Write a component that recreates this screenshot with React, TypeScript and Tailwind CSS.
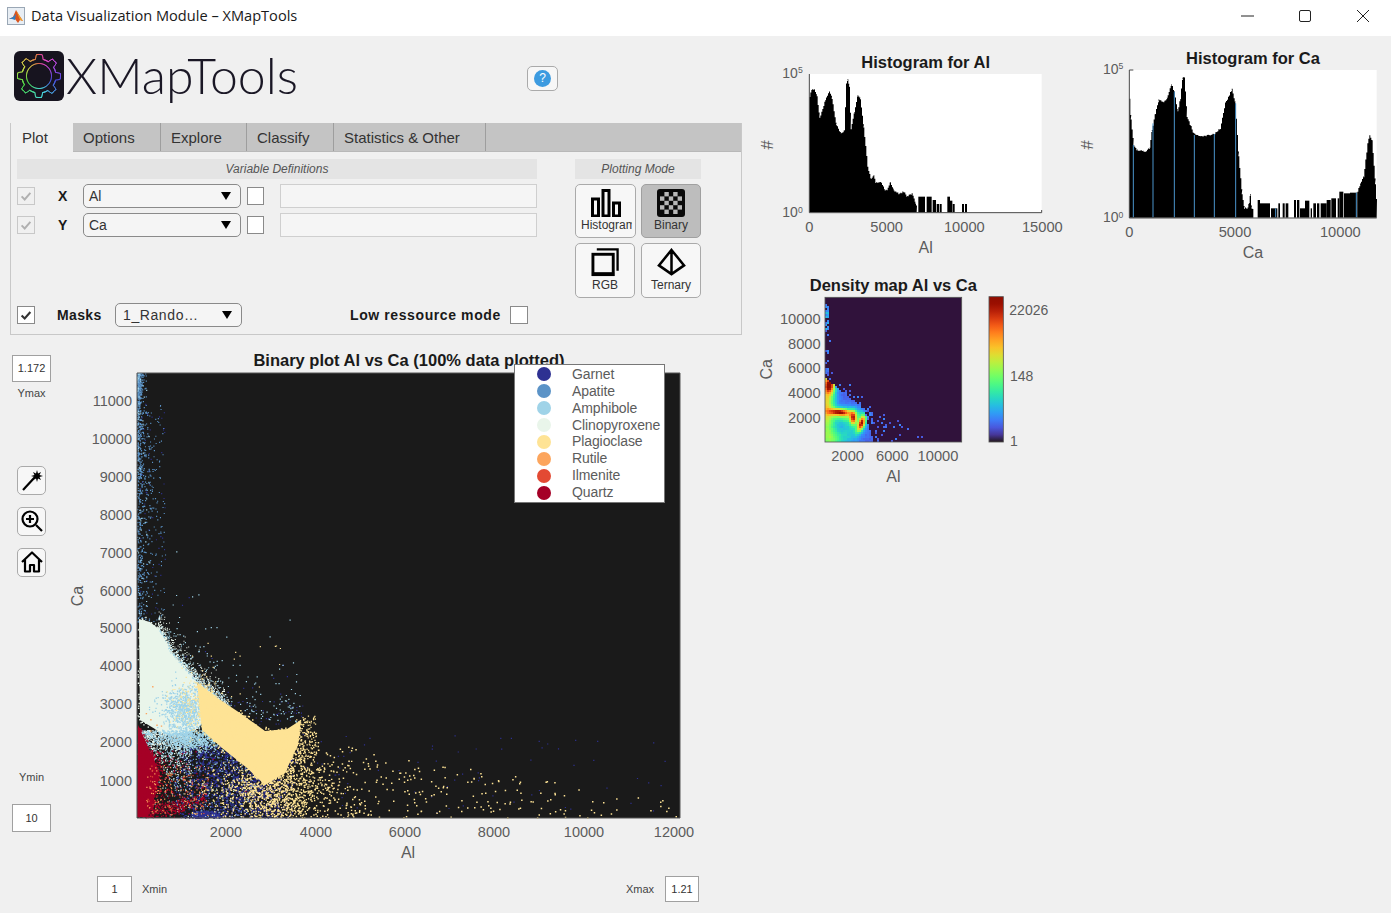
import { useMemo } from "react";
import type { ReactNode } from "react";

type Pt = [number, number];

function rng(seed: number) {
  let a = seed;
  return () => {
    a |= 0;
    a = (a + 0x6d2b79f5) | 0;
    let t = Math.imul(a ^ (a >>> 15), 1 | a);
    t = (t + Math.imul(t ^ (t >>> 7), 61 | t)) ^ t;
    return ((t ^ (t >>> 14)) >>> 0) / 4294967296;
  };
}

function inside(poly: Pt[], x: number, y: number) {
  let hit = false;
  for (let i = 0, j = poly.length - 1; i < poly.length; j = i++) {
    const [xi, yi] = poly[i];
    const [xj, yj] = poly[j];
    if (yi > y !== yj > y && x < ((xj - xi) * (y - yi)) / (yj - yi) + xi) hit = !hit;
  }
  return hit;
}

const pts = (p: Pt[]) => p.map((q) => q.join(",")).join(" ");

// rough outline -> stepped, slightly noisy histogram outline
function stepped(p: Pt[], seed: number, base: number) {
  const r = rng(seed);
  const out: Pt[] = [[p[0][0], base]];
  for (let i = 0; i < p.length - 1; i++) {
    const [x0, y0] = p[i];
    const [x1, y1] = p[i + 1];
    for (let x = x0; x < x1; x += 3) {
      const y = Math.min(base, y0 + ((y1 - y0) * (x - x0)) / (x1 - x0 || 1) + (r() - 0.5) * 5);
      out.push([x, y], [x + 3, y]);
    }
  }
  out.push([p[p.length - 1][0], base]);
  return out;
}

function turbo(t: number) {
  const r = 0.13572138 + t * (4.6153926 + t * (-42.66032258 + t * (132.13108234 + t * (-152.94239396 + t * 59.28637943))));
  const g = 0.09140261 + t * (2.19418839 + t * (4.84296658 + t * (-14.18503333 + t * (4.27729857 + t * 2.82956604))));
  const b = 0.1066733 + t * (12.64194608 + t * (-60.58204836 + t * (110.36276771 + t * (-89.90310912 + t * 27.34824973))));
  const c = (v: number) => Math.round(Math.min(1, Math.max(0, v)) * 255);
  return `rgb(${c(r)},${c(g)},${c(b)})`;
}

const GARNET = "#2e3192";
const APATITE = "#5b93c7";
const AMPHIBOLE = "#9fd3e8";
const CLINO = "#e9f5ea";
const PLAG = "#fee395";
const RUTILE = "#fca55d";
const ILMENITE = "#e34a33";
const QUARTZ = "#a50026";

const clinoCore: Pt[] = [[139, 619], [150, 622], [160, 630], [171, 652], [195, 679], [210, 713], [195, 731], [165, 735], [140, 720]];
const plagCore: Pt[] = [[197, 682], [213, 695], [240, 713], [265, 731], [287, 729], [301, 720], [298, 745], [285, 773], [265, 785], [247, 768], [222, 748], [202, 730]];
const quartzCore: Pt[] = [[138, 725], [146, 742], [160, 773], [155, 795], [148, 817], [137, 817]];
const quartzBand: Pt[] = [[150, 806], [175, 803], [203, 794], [205, 798], [180, 811], [150, 815]];

function buildScatter() {
  const r = rng(42);
  const layers: Record<string, string[]> = {};
  const add = (c: string, x: number, y: number, s = 1.4) => {
    if (x < 137 || x > 680 || y < 373 || y > 817.5) return;
    (layers[c] ||= []).push(`M${x.toFixed(1)} ${y.toFixed(1)}h${s}v${s}h-${s}z`);
  };
  const exp = (k: number) => -Math.log(1 - r()) * k;
  const gauss = () => Math.sqrt(-2 * Math.log(1 - r())) * Math.cos(2 * Math.PI * r());
  // sample a polygon, jittered so that its edge goes soft
  const cloud = (poly: Pt[], n: number, jitter: number, c: string, s = 1.4) => {
    const xs = poly.map((p) => p[0]);
    const ys = poly.map((p) => p[1]);
    const x0 = Math.min(...xs);
    const w = Math.max(...xs) - x0;
    const y0 = Math.min(...ys);
    const h = Math.max(...ys) - y0;
    for (let i = 0; i < n; i++) {
      const x = x0 + r() * w;
      const y = y0 + r() * h;
      if (inside(poly, x, y)) add(c, x + gauss() * jitter, y + gauss() * jitter, s);
    }
  };

  // apatite strip climbing the left edge
  for (let i = 0; i < 900; i++) {
    const y = 373 + Math.pow(r(), 1.9) * 250;
    add(r() < 0.92 ? APATITE : AMPHIBOLE, 137 + exp(1.6 + (y - 373) * 0.02), y, 1.2);
  }
  for (let i = 0; i < 170; i++) add(r() < 0.7 ? APATITE : GARNET, 140 + r() * 25, 400 + r() * 220, 1.1);

  // garnet cloud
  for (let i = 0; i < 1500; i++) add(GARNET, 172 + r() * 95 + r() * 30, 745 + r() * 73, 1.4);
  for (let i = 0; i < 180; i++) add(GARNET, 192 + r() * 28, 811 + r() * 7, 1.6);
  for (let i = 0; i < 70; i++) add(GARNET, 285 + r() * 380, 735 + r() * 82, 1.2);
  for (let i = 0; i < 60; i++) add(GARNET, 225 + r() * 80, 700 + r() * 40, 1.1);
  for (let i = 0; i < 450; i++) add(r() < 0.4 ? APATITE : AMPHIBOLE, 165 + r() * 90, 745 + r() * 72, 1.1);

  // clinopyroxene body with a fuzzy ridge above it
  cloud(clinoCore, 2500, 2.5, CLINO);
  const ridge = (x: number) => (x < 171 ? 630 + (x - 160) * 2 : x < 195 ? 652 + (x - 171) * 1.12 : 679 + (x - 195) * 0.85);
  for (let i = 0; i < 1000; i++) {
    const x = 158 + r() * 70;
    add(r() < 0.8 ? CLINO : AMPHIBOLE, x, ridge(x) - exp(5) + 2, 1);
  }
  for (let i = 0; i < 210; i++) {
    const x = 165 + r() * 135;
    const edge = x < 238 ? ridge(x) : 716 + (x - 238) * 0.1;
    add(r() < 0.85 ? AMPHIBOLE : GARNET, x, edge - exp(19), 1.2);
  }
  for (let i = 0; i < 1100; i++) {
    add(r() < 0.65 ? CLINO : AMPHIBOLE, 141 + r() * 50, 730 + exp(15), 1.2);
  }

  // plagioclase spread
  cloud(plagCore, 3000, 2.5, PLAG, 1.5);
  for (let i = 0; i < 1300; i++) {
    add(PLAG, 272 + gauss() * 30, 792 + gauss() * 19, 1.4);
  }
  for (let i = 0; i < 500; i++) {
    const x = 250 + exp(110);
    const top = 735 + (x - 280) * 0.17;
    add(PLAG, x, top + r() * (818 - top), 1.5);
  }
  for (let i = 0; i < 150; i++) add(PLAG, 296 + r() * 20, 715 + r() * 45, 1.3);
  for (let i = 0; i < 14; i++) add(PLAG, 205 + r() * 80, 640 + r() * 60, 1.2);

  // amphibole patches inside the clino cloud
  for (let i = 0; i < 800; i++) add(AMPHIBOLE, 186 + gauss() * 12, 708 + gauss() * 11, 1.3);
  for (let i = 0; i < 800; i++) add(AMPHIBOLE, 195 + gauss() * 16, 738 + gauss() * 6, 1.3);
  for (let i = 0; i < 220; i++) add(PLAG, 196 + gauss() * 12, 705 + gauss() * 16, 1.2);

  // oxides at the base
  for (let i = 0; i < 240; i++) add(r() < 0.6 ? RUTILE : ILMENITE, 146 + r() * 62, 765 + r() * 50, 1.2);
  for (let i = 0; i < 6; i++) add(RUTILE, 145 + r() * 20, 675 + r() * 60, 1.4);

  // quartz fringe
  cloud(quartzCore, 900, 1.5, QUARTZ);
  cloud(quartzBand, 500, 2, QUARTZ);
  for (let i = 0; i < 350; i++) add(QUARTZ, 148 + exp(10), 750 + r() * 67, 1.3);

  return [APATITE, GARNET, AMPHIBOLE, CLINO, PLAG, RUTILE, ILMENITE, QUARTZ]
    .filter((c) => layers[c])
    .map((c) => ({ c, d: layers[c].join("") }));
}

function buildDensity() {
  const r = rng(7);
  const g = (u: number, v: number, cu: number, cv: number, su: number, sv: number) =>
    Math.exp(-(((u - cu) / su) ** 2) - ((v - cv) / sv) ** 2);
  const cells: { x: number; y: number; f: string }[] = [];
  const step = 6;
  for (let v = 84; v < 516; v += step) {
    for (let u = 225; u < 635; u += step) {
      let t = 0;
      const edge = 322 + (u - 225) * 0.8;
      const solid = v > edge && u < 340 + (v - 420) * 0.3;
      if (solid) {
        t = 0.1 + 0.03 * r();
        t += 0.5 * g(u, v, 225, 400, 26, 100);
        t += 0.26 * g(u, v, 245, 505, 38, 34);
        t += 0.14 * g(u, v, 300, 480, 30, 40);
        t += 0.32 * g(u, v, 285, 432, 42, 22);
        t += 0.22 * g(u, v, 335, 452, 12, 26);
        t += 0.62 * g(u, v, 236, 342, 15, 24);
        const a = u - 265;
        const b = v - 423 - a * 0.05;
        t += 0.6 * Math.exp(-((a / 30) ** 2) - (b / 10) ** 2);
        t += 0.55 * g(u, v, 307, 442, 10, 20);
        const c = u - 330 + (v - 460) * 0.35;
        t += 0.6 * Math.exp(-((c / 10) ** 2) - ((v - 460) / 23) ** 2);
        if (v < edge + 7 && u > 250) t = Math.min(t, 0.16 + 0.06 * r());
      } else {
        const left = u < 238 && v > 100 && v < 325 && r() < (u < 232 ? 0.6 : 0.09) * (v > 180 && v < 250 && u < 232 ? 0.5 : 1);
        const under = u >= 335 && v > 400 + (u - 340) * 0.4 && r() < 0.24 * Math.exp(-(u - 340) / 80);
        const over = u > 240 && u < 360 && v > edge - 40 && v < edge && r() < 0.16;
        if (left) t = v < 180 ? 0.14 + r() * 0.12 : 0.1 + r() * 0.08;
        if (under || over) t = 0.09 + r() * 0.08;
      }
      if (t > 0) cells.push({ x: u, y: v, f: turbo(Math.min(t, 1)) });
    }
  }
  return cells;
}

function Tick({ x, y, children, end }: { x: number; y: number; children: ReactNode; end?: boolean }) {
  return (
    <text x={x} y={y} fontSize={44} fill="#5c5c5c" textAnchor={end ? "end" : "middle"}>
      {children}
    </text>
  );
}

function Pow({ x, y, p }: { x: number; y: number; p: number }) {
  return (
    <text x={x} y={y} fontSize={42} fill="#5c5c5c">
      10
      <tspan dy={-14} fontSize={26}>
        {p}
      </tspan>
    </text>
  );
}

function Hash() {
  return (
    <text x={46} y={315} fontSize={50} fill="#5c5c5c" textAnchor="middle" dominantBaseline="middle" transform="rotate(90 46 315)">
      #
    </text>
  );
}

function HistAl() {
  const main: Pt[] = [[178, 170], [184, 150], [192, 148], [200, 170], [208, 235], [225, 180], [237, 153], [245, 175], [258, 255], [272, 282], [282, 270], [288, 130], [292, 120], [297, 140], [302, 268], [312, 215], [322, 165], [330, 175], [340, 260], [352, 380], [362, 418], [370, 405], [376, 428], [390, 425], [404, 450], [410, 448], [420, 425], [430, 450], [445, 462], [460, 455], [470, 470], [485, 460], [495, 490], [500, 500]];
  const bars = [[505, 525, 470], [530, 545, 470], [548, 558, 480], [560, 568, 492], [570, 575, 492], [592, 600, 470], [600, 607, 482], [608, 614, 492], [636, 642, 492], [645, 651, 492]];
  const outline = useMemo(() => stepped(main, 3, 517), []);
  return (
    <svg viewBox="0 0 960 690" className="h-[230px] w-[320px] shrink-0">
      <rect x={178} y={102} width={697} height={415} fill="#ffffff" />
      <polygon points={pts(outline)} fill="#000000" />
      {bars.map(([a, b, t]) => (
        <rect key={a} x={a} y={t} width={b - a} height={517 - t} fill="#000000" />
      ))}
      <path d="M178 102V518H875V510" fill="none" stroke="#4a4a4a" strokeWidth={3} />
      <text x={527} y={84} fontSize={49.5} fontWeight={700} fill="#1a1a1a" textAnchor="middle">
        Histogram for Al
      </text>
      <Pow x={97} y={113} p={5} />
      <Pow x={97} y={532} p={0} />
      <Hash />
      <Tick x={178} y={575}>0</Tick>
      <Tick x={410} y={575}>5000</Tick>
      <Tick x={643} y={575}>10000</Tick>
      <Tick x={877} y={575}>15000</Tick>
      <text x={527} y={638} fontSize={48} fill="#5c5c5c" textAnchor="middle">
        Al
      </text>
    </svg>
  );
}

function HistCa() {
  const main: Pt[] = [[178, 175], [182, 240], [190, 315], [200, 330], [225, 335], [238, 325], [245, 270], [255, 220], [265, 180], [280, 185], [290, 175], [303, 133], [312, 155], [322, 215], [330, 175], [337, 112], [342, 112], [350, 230], [370, 280], [395, 290], [430, 283], [450, 265], [465, 190], [485, 148], [495, 190], [505, 350], [515, 460], [522, 505], [532, 505], [536, 490], [540, 462], [544, 505], [550, 505]];
  const tail: Pt[] = [[862, 455], [870, 432], [880, 410], [892, 310], [898, 288], [905, 300], [915, 430], [920, 505]];
  const bars = [[563, 570, 480], [570, 600, 490], [603, 622, 505], [625, 630, 490], [638, 644, 490], [647, 655, 490], [672, 678, 480], [681, 688, 480], [690, 705, 505], [705, 718, 482], [722, 726, 505], [730, 738, 490], [741, 748, 490], [752, 770, 490], [770, 782, 480], [784, 798, 475], [803, 808, 475], [808, 820, 455], [822, 840, 460], [840, 862, 458]];
  const blue = [[190, 315], [249, 250], [313, 155], [373, 285], [433, 282], [497, 190], [617, 505], [859, 458]];
  const a = useMemo(() => stepped(main, 5, 533), []);
  const b = useMemo(() => stepped(tail, 6, 533), []);
  return (
    <svg viewBox="0 0 960 690" className="h-[230px] w-[320px] shrink-0">
      <rect x={178} y={90} width={742} height={443} fill="#ffffff" />
      <polygon points={pts(a)} fill="#000000" />
      <polygon points={pts(b)} fill="#000000" />
      {bars.map(([x0, x1, t]) => (
        <rect key={x0} x={x0} y={t} width={x1 - x0} height={533 - t} fill="#000000" />
      ))}
      {blue.map(([x, t]) => (
        <line key={x} x1={x} x2={x} y1={t} y2={532} stroke="#4a94cc" strokeWidth={3} />
      ))}
      <path d="M190 90H178V534H920" fill="none" stroke="#4a4a4a" strokeWidth={3} />
      <text x={549} y={72} fontSize={49.5} fontWeight={700} fill="#1a1a1a" textAnchor="middle">
        Histogram for Ca
      </text>
      <Pow x={99} y={101} p={5} />
      <Pow x={99} y={547} p={0} />
      <Hash />
      <Tick x={178} y={590}>0</Tick>
      <Tick x={495} y={590}>5000</Tick>
      <Tick x={811} y={590}>10000</Tick>
      <text x={549} y={655} fontSize={48} fill="#5c5c5c" textAnchor="middle">
        Ca
      </text>
    </svg>
  );
}

function DensityMap() {
  const cells = useMemo(buildDensity, []);
  const stops = Array.from({ length: 21 }, (_, i) => i / 20);
  return (
    <svg viewBox="0 0 960 660" className="h-[220px] w-[320px]">
      <defs>
        <linearGradient id="turbo" x1="0" y1="1" x2="0" y2="0">
          {stops.map((s) => (
            <stop key={s} offset={s} stopColor={turbo(s)} />
          ))}
        </linearGradient>
        <clipPath id="dens">
          <rect x={225} y={82} width={410} height={434} />
        </clipPath>
      </defs>
      <rect x={225} y={82} width={410} height={434} fill="#30123b" />
      <g clipPath="url(#dens)">
        <g className="blur-[0.5px]">
          {cells.map((c) => (
            <rect key={`${c.x}-${c.y}`} x={c.x} y={c.y} width={6} height={6} fill={c.f} />
          ))}
        </g>
      </g>
      <rect x={225} y={82} width={410} height={434} fill="none" stroke="#555" strokeWidth={2.5} />
      <rect x={717} y={80} width={43} height={436} fill="url(#turbo)" stroke="#555" strokeWidth={2.5} />
      <text x={430} y={62} fontSize={49.5} fontWeight={700} fill="#1a1a1a" textAnchor="middle">
        Density map Al vs Ca
      </text>
      {[["10000", 162], ["8000", 236], ["6000", 310], ["4000", 384], ["2000", 458]].map(([l, y]) => (
        <Tick key={l} x={212} y={y as number} end>
          {l}
        </Tick>
      ))}
      <Tick x={293} y={573}>2000</Tick>
      <Tick x={427} y={573}>6000</Tick>
      <Tick x={564} y={573}>10000</Tick>
      <text x={430} y={635} fontSize={48} fill="#5c5c5c" textAnchor="middle">
        Al
      </text>
      <text x={54} y={298} fontSize={48} fill="#5c5c5c" textAnchor="middle" dominantBaseline="middle" transform="rotate(-90 54 298)">
        Ca
      </text>
      <text x={778} y={135} fontSize={42} fill="#5c5c5c">22026</text>
      <text x={780} y={334} fontSize={42} fill="#5c5c5c">148</text>
      <text x={780} y={529} fontSize={42} fill="#5c5c5c">1</text>
    </svg>
  );
}

function BinaryPlot() {
  const layers = useMemo(buildScatter, []);
  const yt = [[11000, 401], [10000, 439], [9000, 477], [8000, 515], [7000, 553], [6000, 591], [5000, 628], [4000, 666], [3000, 704], [2000, 742], [1000, 781]];
  const xt = [[2000, 226], [4000, 316], [6000, 405], [8000, 494], [10000, 584], [12000, 674]];
  const byColor = (c: string) => layers.find((l) => l.c === c);
  return (
    <svg viewBox="60 345 640 525" className="h-[525px] w-[640px]">
      <text x={409} y={366} fontSize={16.5} fontWeight={700} fill="#1a1a1a" textAnchor="middle">
        Binary plot Al vs Ca (100% data plotted)
      </text>
      <rect x={137} y={373} width={543} height={445} fill="#1a1a1a" />
      <g className="blur-[0.3px]">
        <path d={byColor(APATITE)?.d} fill={APATITE} />
        <path d={byColor(GARNET)?.d} fill={GARNET} />
        <polygon points={pts(clinoCore)} fill={CLINO} />
        <path d={byColor(CLINO)?.d} fill={CLINO} />
        <path d={byColor(AMPHIBOLE)?.d} fill={AMPHIBOLE} />
        <polygon points={pts(plagCore)} fill={PLAG} />
        <path d={byColor(PLAG)?.d} fill={PLAG} />
        <polygon points={pts(quartzCore)} fill={QUARTZ} />
        <path d={byColor(QUARTZ)?.d} fill={QUARTZ} />
        <path d={byColor(RUTILE)?.d} fill={RUTILE} />
        <path d={byColor(ILMENITE)?.d} fill={ILMENITE} />
      </g>
      <path d="M137 373H680V818H137Z" fill="none" stroke="#555" strokeWidth={1} />
      {yt.map(([v, y]) => (
        <text key={v} x={132} y={y + 5} fontSize={14.5} fill="#5c5c5c" textAnchor="end">
          {v}
        </text>
      ))}
      {xt.map(([v, x]) => (
        <text key={v} x={x} y={837} fontSize={14.5} fill="#5c5c5c" textAnchor="middle">
          {v}
        </text>
      ))}
      <text x={408} y={858} fontSize={16} fill="#5c5c5c" textAnchor="middle">
        Al
      </text>
      <text x={79} y={596} fontSize={16} fill="#5c5c5c" textAnchor="middle" dominantBaseline="middle" transform="rotate(-90 79 596)">
        Ca
      </text>
    </svg>
  );
}

const legend = [
  ["Garnet", "bg-[#2e3192]"],
  ["Apatite", "bg-[#5b93c7]"],
  ["Amphibole", "bg-[#9fd3e8]"],
  ["Clinopyroxene", "bg-[#e9f5ea]"],
  ["Plagioclase", "bg-[#fee395]"],
  ["Rutile", "bg-[#fca55d]"],
  ["Ilmenite", "bg-[#e34a33]"],
  ["Quartz", "bg-[#a50026]"],
];

function Legend() {
  return (
    <div className="absolute left-[514px] top-[19px] flex h-[139px] w-[151px] flex-col justify-center border border-[#777] bg-white">
      {legend.map(([name, dot]) => (
        <div key={name} className="flex h-[16.9px] items-center">
          <span className={`ml-[22px] h-[14px] w-[14px] rounded-full ${dot}`} />
          <span className="ml-[21px] text-[14px] tracking-[-0.1px] text-[#5c5c5c]">{name}</span>
        </div>
      ))}
    </div>
  );
}

function GearLogo() {
  const segs = useMemo(() => {
    const out: { x1: number; y1: number; x2: number; y2: number; c: string }[] = [];
    const hue = (a: number) => {
      const ccw = (((-a - Math.PI / 2) % (Math.PI * 2)) + Math.PI * 2) % (Math.PI * 2);
      return Math.round(12 + (ccw / (Math.PI * 2)) * 320);
    };
    const gearR = (a: number) => {
      const n = (((a / (Math.PI * 2)) * 8 + 800.15) % 1 + 1) % 1;
      if (n < 0.34) return 21.5;
      if (n < 0.46) return 21.5 - 4.5 * ((n - 0.34) / 0.12);
      if (n < 0.88) return 17;
      return 17 + 4.5 * ((n - 0.88) / 0.12);
    };
    const N = 320;
    for (let i = 0; i < N; i++) {
      const a = (i / N) * Math.PI * 2;
      const b = ((i + 1) / N) * Math.PI * 2;
      out.push({
        x1: 25 + Math.cos(a) * gearR(a),
        y1: 25 + Math.sin(a) * gearR(a),
        x2: 25 + Math.cos(b) * gearR(b),
        y2: 25 + Math.sin(b) * gearR(b),
        c: `hsl(${hue(a)} 70% 58%)`,
      });
    }
    for (let i = 0; i < 72; i++) {
      const a = (i / 72) * Math.PI * 2;
      const b = ((i + 1) / 72) * Math.PI * 2;
      out.push({
        x1: 25 + Math.cos(a) * 12.5,
        y1: 25 + Math.sin(a) * 12.5,
        x2: 25 + Math.cos(b) * 12.5,
        y2: 25 + Math.sin(b) * 12.5,
        c: `hsl(${hue(a)} 70% 58%)`,
      });
    }
    return out;
  }, []);
  return (
    <svg viewBox="0 0 50 50" className="h-[50px] w-[50px] shrink-0">
      <rect width={50} height={50} rx={6} fill="#17141f" />
      {segs.map((s, i) => (
        <line key={i} x1={s.x1} y1={s.y1} x2={s.x2} y2={s.y2} stroke={s.c} strokeWidth={0.9} strokeLinecap="round" />
      ))}
    </svg>
  );
}

function Check({ state }: { state: "off" | "dim" | "on" }) {
  if (state === "dim")
    return (
      <span className="flex h-[18px] w-[18px] items-center justify-center border border-[#c8c8c8] bg-[#f0f0f0]">
        <svg viewBox="0 0 16 16" className="h-[14px] w-[14px]">
          <path d="M3 8.5l3.5 3.5L13 4.5" fill="none" stroke="#b0b0b0" strokeWidth={2.2} />
        </svg>
      </span>
    );
  return (
    <span className="flex h-[18px] w-[18px] shrink-0 items-center justify-center border border-[#8a8a8a] bg-white">
      {state === "on" && (
        <svg viewBox="0 0 16 16" className="h-[14px] w-[14px]">
          <path d="M3 8.5l3.5 3.5L13 4.5" fill="none" stroke="#333" strokeWidth={2.4} />
        </svg>
      )}
    </span>
  );
}

function Select({ label, w, wide }: { label: string; w: string; wide?: boolean }) {
  return (
    <div className={`flex h-[24px] items-center justify-between rounded-[5px] border border-[#8a8a8a] bg-[#f5f5f5] pr-[9px] text-[14px] text-[#333] ${wide ? "pl-[7px] tracking-[0.6px]" : "pl-[5px]"} ${w}`}>
      <span>{label}</span>
      <span className="h-0 w-0 border-x-[5px] border-t-[8px] border-x-transparent border-t-black" />
    </div>
  );
}

function VarRow({ name, value }: { name: string; value: string }) {
  return (
    <div className="flex h-[24px] items-center">
      <Check state="dim" />
      <span className="ml-[23px] w-[25px] text-[14px] font-bold text-[#1a1a1a]">{name}</span>
      <Select label={value} w="w-[158px]" />
      <span className="ml-[6px] h-[18px] w-[17px] border border-[#8a8a8a] bg-white" />
      <span className="ml-[16px] h-[24px] w-[257px] border border-[#cfcfcf] bg-[#f5f5f5]" />
    </div>
  );
}

function ModeButton({ label, active, children, clip, low }: { label: string; active?: boolean; children: ReactNode; clip?: boolean; low?: boolean }) {
  return (
    <div className={`flex flex-col items-center overflow-hidden rounded-[5px] border pt-[3px] text-[12px] leading-[14px] ${low ? "h-[55px]" : "h-[54px]"} ${active ? "border-[#a0a0a0] bg-[#bdbdbd] text-[#333]" : "border-[#aaa] bg-[#f7f7f7] text-[#333]"} ${clip ? "w-[61px] items-start pl-[5px]" : "w-[60px]"}`}>
      <div className={`flex items-center ${low ? "h-[31px]" : "h-[30px]"} ${clip ? "w-[50px] justify-center" : ""}`}>{children}</div>
      <span className={clip ? "w-[51px] overflow-hidden whitespace-nowrap" : ""}>{label}</span>
    </div>
  );
}

function Field({ value, w, h }: { value: string; w: string; h: string }) {
  return <div className={`flex items-center justify-center border border-[#a0a0a0] bg-white text-[11px] text-[#333] ${w} ${h}`}>{value}</div>;
}

function ToolButton({ children }: { children: ReactNode }) {
  return <div className="ml-[5px] flex h-[29px] w-[29px] items-center justify-center rounded-[5px] border border-[#aaa] bg-[#f7f7f7]">{children}</div>;
}

const tabs = [
  ["Options", "w-[88px]"],
  ["Explore", "w-[86px]"],
  ["Classify", "w-[87px]"],
  ["Statistics & Other", "w-[152px]"],
];

const checker = [0, 1, 2, 3, 4].flatMap((i) => [0, 1, 2, 3, 4].filter((j) => (i + j) % 2 === 1).map((j) => [i, j]));

export default function App() {
  return (
    <div className="h-[913px] w-[1391px] overflow-hidden bg-[#f0f0f0] font-['Liberation_Sans',sans-serif]">
      {/* Title bar */}
      <div className="flex h-[36px] items-center bg-white pb-[4px] pl-[7px]">
        <svg viewBox="0 0 18 18" className="h-[18px] w-[18px]">
          <rect x={0.5} y={0.5} width={17} height={17} fill="#e8eef4" stroke="#9aa7b5" />
          <path d="M2 12l4-2 3-7 3 5 4 6-3-1-2 3-3-4z" fill="#d9541e" />
          <path d="M2 12l4-2 3-3-1 6-3-1z" fill="#2f7fc4" />
          <path d="M9 3l3 5 4 6-3-1z" fill="#f0a02c" />
        </svg>
        <span className="ml-[6px] font-['Open_Sans',sans-serif] text-[14.6px] text-[#1a1a1a]">Data Visualization Module – XMapTools</span>
        <div className="ml-auto flex items-center">
          <svg viewBox="0 0 14 14" className="mr-[44px] h-[14px] w-[14px]">
            <path d="M1 7h13" stroke="#222" strokeWidth={1} />
          </svg>
          <svg viewBox="0 0 14 14" className="mr-[44px] h-[14px] w-[14px]">
            <rect x={1.5} y={1.5} width={11} height={11} rx={1.5} fill="none" stroke="#222" strokeWidth={1} />
          </svg>
          <svg viewBox="0 0 14 14" className="mr-[21px] h-[14px] w-[14px]">
            <path d="M1 1l12 12M13 1L1 13" stroke="#222" strokeWidth={1} />
          </svg>
        </div>
      </div>

      <div className="flex">
        {/* Left column */}
        <div className="w-[750px] shrink-0">
          <div className="flex h-[87px] items-center pb-[8px] pl-[14px]">
            <GearLogo />
            <span className="ml-[2px] mt-[-1px] font-['Lato',sans-serif] text-[50px] font-light leading-none text-[#1a1725]">XMapTools</span>
            <div className="ml-[229px] mt-[5px] flex h-[25px] w-[31px] items-center justify-center rounded-[5px] border border-[#aaa] bg-[#f7f7f7]">
              <span className="flex h-[17px] w-[17px] items-center justify-center rounded-full bg-[#3d9be0] text-[12px] text-white">?</span>
            </div>
          </div>

          {/* Tab panel */}
          <div className="ml-[10px] h-[212px] w-[732px] border border-t-0 border-[#c8c8c8]">
            <div className="flex h-[29px] border-b border-[#b8b8b8] bg-[#c4c4c4] text-[15px] text-[#333]">
              <div className="-mb-px flex w-[62px] items-center bg-[#f0f0f0] pl-[11px] pt-[2px]">Plot</div>
              {tabs.map(([t, w]) => (
                <div key={t} className={`flex items-center border-r border-[#9e9e9e] pl-[10px] pt-[2px] ${w}`}>
                  {t}
                </div>
              ))}
            </div>
            <div className="flex pl-[6px] pt-[7px]">
              <div className="w-[520px]">
                <div className="flex h-[20px] items-center justify-center bg-[#e4e4e4] text-[12px] italic text-[#555]">Variable Definitions</div>
                <div className="mt-[5px] flex flex-col gap-[5px]">
                  <VarRow name="X" value="Al" />
                  <VarRow name="Y" value="Ca" />
                </div>
                <div className="mt-[66px] flex h-[24px] items-center">
                  <Check state="on" />
                  <span className="ml-[22px] w-[58px] text-[14px] font-bold tracking-[0.35px] text-[#1a1a1a]">Masks</span>
                  <Select label="1_Rando…" w="w-[127px]" wide />
                  <span className="ml-[108px] text-[14px] font-bold tracking-[0.6px] text-[#1a1a1a]">Low ressource mode</span>
                  <span className="ml-[9px]">
                    <Check state="off" />
                  </span>
                </div>
              </div>
              <div className="ml-[38px] w-[126px]">
                <div className="flex h-[20px] items-center justify-center bg-[#e4e4e4] text-[12px] italic text-[#555]">Plotting Mode</div>
                <div className="mt-[5px] grid grid-cols-[61px_60px] gap-x-[5px] gap-y-[5px]">
                  <ModeButton label="Histogram" clip>
                    <svg viewBox="0 0 30 28" className="h-[28px] w-[30px]">
                      <path d="M1.5 10h6v17h-6zM12 1.5h6V27h-6zM22.5 14h6v13h-6z" fill="none" stroke="#000" strokeWidth={3} />
                    </svg>
                  </ModeButton>
                  <ModeButton label="Binary" active>
                    <svg viewBox="0 0 28 28" className="h-[28px] w-[28px]">
                      <rect width={28} height={28} rx={3} fill="#0a0a0a" />
                      {checker.map(([i, j]) => (
                        <rect key={`${i}${j}`} x={3 + i * 4.4} y={3 + j * 4.4} width={4.4} height={4.4} fill="#b8b8b8" />
                      ))}
                    </svg>
                  </ModeButton>
                  <ModeButton label="RGB" low>
                    <svg viewBox="0 0 30 30" className="h-[29px] w-[29px]">
                      <path d="M6 1.5h21.5v22" fill="none" stroke="#000" strokeWidth={2.4} />
                      <rect x={2} y={6.5} width={21} height={21} fill="none" stroke="#000" strokeWidth={3} />
                      <rect x={1} y={25} width={23} height={4} fill="#000" />
                    </svg>
                  </ModeButton>
                  <ModeButton label="Ternary" low>
                    <svg viewBox="0 0 30 30" className="h-[29px] w-[29px]">
                      <path d="M15 2L28 18 15 27 2 18zM15 2v25" fill="none" stroke="#000" strokeWidth={2.6} strokeLinejoin="miter" />
                    </svg>
                  </ModeButton>
                </div>
              </div>
            </div>
          </div>

          {/* Binary plot */}
          <div className="relative mt-[10px] flex">
            <div className="flex h-[525px] w-[60px] shrink-0 flex-col pl-[12px]">
              <div className="mt-[10px]">
                <Field value="1.172" w="w-[39px]" h="h-[27px]" />
              </div>
              <div className="mt-[3px] w-[39px] text-center text-[11px] text-[#444]">Ymax</div>
              <div className="mt-[64px] flex flex-col gap-[12px]">
                <ToolButton>
                  <svg viewBox="0 0 24 24" className="h-[24px] w-[24px]">
                    <path d="M3 22L15 9" stroke="#000" strokeWidth={2.2} />
                    <path d="M17 2l1 3.5 3-1.5-1.5 3 3.5 1-3.5 1 1.5 3-3-1.5-1 3.5-1-3.5-3 1.5 1.5-3-3.5-1 3.5-1-1.5-3 3 1.5z" fill="#000" />
                  </svg>
                </ToolButton>
                <ToolButton>
                  <svg viewBox="0 0 24 24" className="h-[24px] w-[24px]">
                    <circle cx={10} cy={10} r={7.5} fill="none" stroke="#000" strokeWidth={2.2} />
                    <path d="M10 6v8M6 10h8M16 16l6 6" stroke="#000" strokeWidth={2.2} />
                  </svg>
                </ToolButton>
                <ToolButton>
                  <svg viewBox="0 0 24 24" className="h-[24px] w-[24px]">
                    <path d="M2 12L12 2.5 22 12M5 9.5V21.5h5V15h4v6.5h5V9.5" fill="none" stroke="#000" strokeWidth={2.2} strokeLinejoin="round" />
                  </svg>
                </ToolButton>
              </div>
              <div className="mt-[192px] w-[39px] text-center text-[11px] text-[#444]">Ymin</div>
              <div className="mt-[19px]">
                <Field value="10" w="w-[39px]" h="h-[28px]" />
              </div>
            </div>
            <BinaryPlot />
            <Legend />
          </div>

          <div className="mt-[6px] flex w-[699px] items-center pl-[97px] text-[11px] text-[#444]">
            <Field value="1" w="w-[35px]" h="h-[26px]" />
            <span className="ml-[10px]">Xmin</span>
            <span className="ml-auto mr-[11px]">Xmax</span>
            <Field value="1.21" w="w-[34px]" h="h-[26px]" />
          </div>
        </div>

        {/* Right column */}
        <div className="pt-[4px]">
          <div className="flex">
            <HistAl />
            <HistCa />
          </div>
          <DensityMap />
        </div>
      </div>
    </div>
  );
}
